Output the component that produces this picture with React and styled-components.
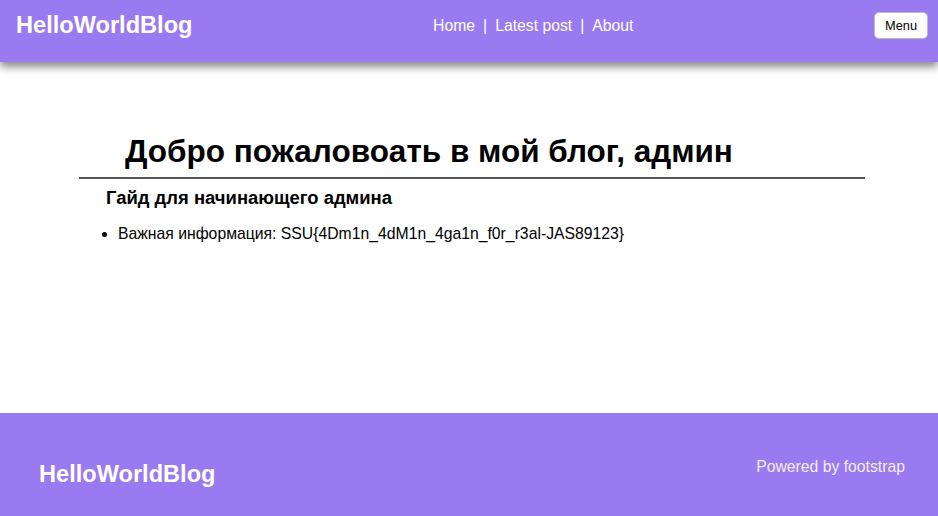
import React from "react";
import styled, { createGlobalStyle } from "styled-components";

const Global = createGlobalStyle`
  html, body { margin: 0; padding: 0; background: #fff; }
  body { font-family: "Liberation Sans", Arial, sans-serif; color: #000; }
`;

const PURPLE = "#9a7af0";

const Page = styled.div`
  min-height: 516px;
  display: flex;
  flex-direction: column;
`;

const Header = styled.header`
  position: relative;
  z-index: 1;
  height: 62px;
  background: ${PURPLE};
  box-shadow: 0 5px 8px rgba(0, 0, 0, 0.45);
  display: flex;
  justify-content: space-between;
  align-items: flex-start;
  padding: 0 10px 0 16px;
  box-sizing: border-box;
`;

const Brand = styled.div`
  color: #fff;
  font-weight: bold;
  font-size: 23.6px;
  line-height: 24px;
  margin-top: ${(p) => p.$top}px;
`;

const Nav = styled.nav`
  color: #fff;
  font-size: 15.75px;
  line-height: 18px;
  display: flex;
  gap: 8px;
  margin-top: 17px;
`;

const NavLink = styled.a`
  color: #fff;
  text-decoration: none;
`;

const MenuButton = styled.button`
  background: #fff;
  border: 1px solid #bbb;
  border-radius: 5px;
  font-family: "Liberation Sans", Arial, sans-serif;
  font-size: 12.8px;
  color: #000;
  padding: 0 10px;
  height: 27px;
  margin-top: 12px;
`;

const Main = styled.main`
  flex: 1;
  padding: 71px 73px 0 79px;
`;

const Title = styled.h1`
  margin: 0;
  padding-left: 46px;
  font-size: 31.5px;
  line-height: 37px;
  font-weight: bold;
  padding-bottom: 7px;
  border-bottom: 2px solid #555;
`;

const Sub = styled.h3`
  margin: 8px 0 0 27px;
  font-size: 18.45px;
  line-height: 22px;
  font-weight: bold;
`;

const List = styled.ul`
  margin: 15px 0 0 0;
  padding-left: 39px;
  font-size: 15.75px;
  line-height: 20px;
`;

const Footer = styled.footer`
  height: 103px;
  background: ${PURPLE};
  display: flex;
  justify-content: space-between;
  align-items: flex-start;
  padding: 0 33px 0 39px;
  box-sizing: border-box;
  margin-top: 167px;
`;

const Powered = styled.div`
  color: #f1eefc;
  font-size: 15.75px;
  margin-top: 45px;
`;

export default function App() {
  return (
    <>
      <Global />
      <Page>
        <Header>
          <Brand $top={13}>HelloWorldBlog</Brand>
          <Nav>
            <NavLink href="#">Home</NavLink>
            <span>|</span>
            <NavLink href="#">Latest post</NavLink>
            <span>|</span>
            <NavLink href="#">About</NavLink>
          </Nav>
          <MenuButton>Menu</MenuButton>
        </Header>
        <Main>
          <Title>Добро пожаловоать в мой блог, админ</Title>
          <Sub>Гайд для начинающего админа</Sub>
          <List>
            <li>Важная информация: SSU{"{"}4Dm1n_4dM1n_4ga1n_f0r_r3al-JAS89123{"}"}</li>
          </List>
        </Main>
        <Footer>
          <Brand $top={49}>HelloWorldBlog</Brand>
          <Powered>Powered by footstrap</Powered>
        </Footer>
      </Page>
    </>
  );
}
